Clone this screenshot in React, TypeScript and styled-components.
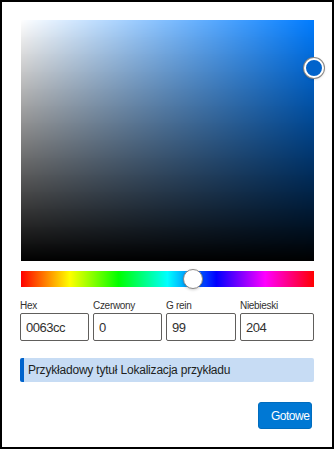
import styled, { createGlobalStyle } from 'styled-components'

const GlobalStyle = createGlobalStyle`
  html, body {
    margin: 0;
    padding: 0;
    background: #fff;
  }
  body {
    font-family: 'Liberation Sans', Arial, sans-serif;
  }
`

const toHsv = (hex: string) => {
  const r = parseInt(hex.slice(0, 2), 16) / 255
  const g = parseInt(hex.slice(2, 4), 16) / 255
  const b = parseInt(hex.slice(4, 6), 16) / 255
  const max = Math.max(r, g, b)
  const min = Math.min(r, g, b)
  const d = max - min
  let h = 0
  if (d !== 0) {
    if (max === r) h = ((g - b) / d) % 6
    else if (max === g) h = (b - r) / d + 2
    else h = (r - g) / d + 4
  }
  h = (h * 60 + 360) % 360
  return { h, s: max === 0 ? 0 : d / max, v: max }
}

const hex = '0063cc'

const App = () => {
  const { h, s, v } = toHsv(hex)
  const fields = [
    { label: 'Hex', value: hex },
    { label: 'Czerwony', value: String(parseInt(hex.slice(0, 2), 16)) },
    { label: 'G rein', value: String(parseInt(hex.slice(2, 4), 16)) },
    { label: 'Niebieski', value: String(parseInt(hex.slice(4, 6), 16)) }
  ]

  return (
    <>
      <GlobalStyle />
      <Frame>
        <ColorArea style={{ backgroundColor: `hsl(${h}, 100%, 50%)` }}>
          <AreaThumb style={{ left: `${s * 100}%`, top: `${(1 - v) * 100}%` }} />
        </ColorArea>
        <HueBar>
          <HueThumb style={{ left: `${(h / 360) * 100}%` }} />
        </HueBar>
        <Fields>
          {fields.map((f) => (
            <Field key={f.label}>
              <Label>{f.label}</Label>
              <TextBox value={f.value} readOnly />
            </Field>
          ))}
        </Fields>
        <Banner>Przykładowy tytuł Lokalizacja przykładu</Banner>
        <Footer>
          <DoneButton>Gotowe</DoneButton>
        </Footer>
      </Frame>
    </>
  )
}

export default App

const Frame = styled.div`
  box-sizing: border-box;
  width: 334px;
  height: 449px;
  border: 2px solid #000;
  padding: 18px 18px 18px 19px;
  display: flex;
  flex-direction: column;
`

const ColorArea = styled.div`
  position: relative;
  height: 242px;
  background-image: linear-gradient(to top, #000, rgba(0, 0, 0, 0)),
    linear-gradient(to right, #fff, rgba(255, 255, 255, 0));
`

const AreaThumb = styled.div`
  position: absolute;
  box-sizing: border-box;
  width: 20px;
  height: 20px;
  margin: -10px 0 0 -10px;
  border-radius: 50%;
  background: #0063cc;
  border: 2px solid #fff;
  box-shadow: 0 0 0 1px #8a8886, 0 1px 3px rgba(0, 0, 0, 0.25);
`

const HueBar = styled.div`
  position: relative;
  margin-top: 10px;
  height: 16px;
  background: linear-gradient(
    to right,
    #f00 0%,
    #ff0 16.66%,
    #0f0 33.33%,
    #0ff 50%,
    #00f 66.66%,
    #f0f 83.33%,
    #f00 100%
  );
`

const HueThumb = styled.div`
  position: absolute;
  box-sizing: border-box;
  top: 50%;
  width: 20px;
  height: 20px;
  margin: -10px 0 0 -10px;
  border-radius: 50%;
  background: #fff;
  border: 1px solid #8a8886;
  box-shadow: 0 1px 3px rgba(0, 0, 0, 0.2);
`

const Fields = styled.div`
  margin-top: 12px;
  margin-left: -1px;
  display: grid;
  grid-template-columns: 69px 69px 70px 74px;
  column-gap: 4px;
`

const Field = styled.div`
  display: flex;
  flex-direction: column;
  gap: 1px;
`

const Label = styled.span`
  font-size: 10px;
  line-height: 13px;
  letter-spacing: -0.3px;
  color: #323130;
`

const TextBox = styled.input`
  box-sizing: border-box;
  width: 100%;
  height: 28px;
  margin: 0;
  padding: 0 5px;
  border: 1px solid #605e5c;
  border-radius: 2px;
  font-family: 'Liberation Sans', Arial, sans-serif;
  font-size: 13px;
  letter-spacing: -0.5px;
  color: #323130;
  background: #fff;
  outline: none;
`

const Banner = styled.div`
  margin-top: 17px;
  margin-left: -1px;
  height: 24px;
  display: flex;
  align-items: center;
  padding-left: 4px;
  border-left: 4px solid #0063cc;
  border-radius: 2px;
  background: #c7dcf4;
  font-size: 12px;
  letter-spacing: -0.2px;
  color: #201f1e;
`

const Footer = styled.div`
  margin-top: 20px;
  display: flex;
  justify-content: flex-end;
  padding-right: 2px;
`

const DoneButton = styled.button`
  box-sizing: border-box;
  width: 54px;
  height: 27px;
  padding: 0 0 0 12px;
  border: 1px solid #006cbe;
  border-radius: 3px;
  background: #0078d4;
  color: #fff;
  font-family: 'Liberation Sans', Arial, sans-serif;
  font-size: 12px;
  letter-spacing: -0.5px;
  text-align: left;
  white-space: nowrap;
  overflow: hidden;
  cursor: pointer;
`
